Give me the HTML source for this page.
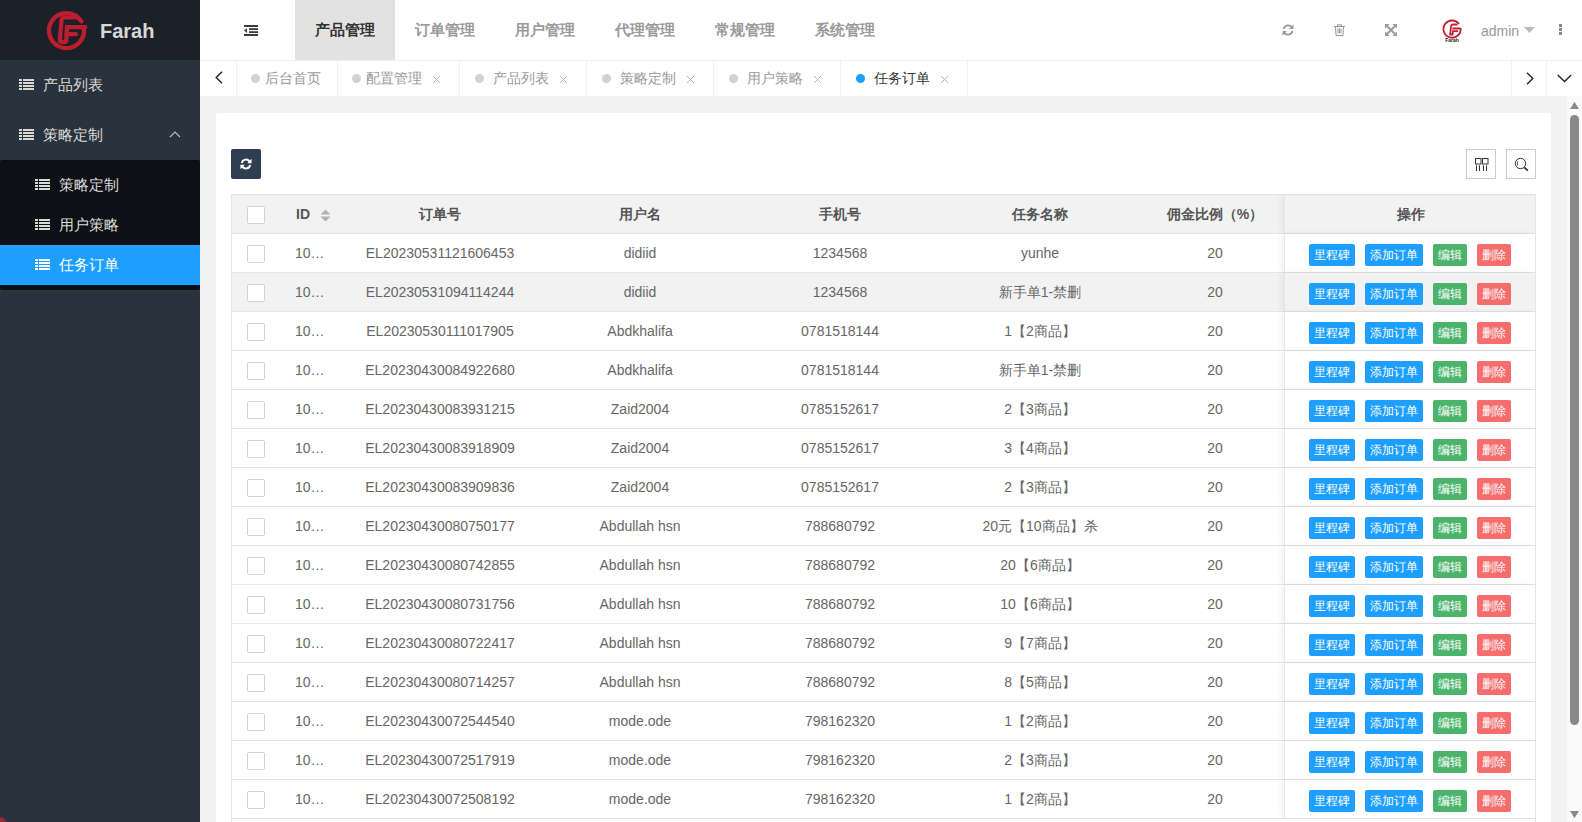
<!DOCTYPE html>
<html><head><meta charset="utf-8">
<style>
*{box-sizing:border-box;margin:0;padding:0}
html,body{width:1582px;height:822px;overflow:hidden;background:#f2f2f2;font-family:"Liberation Sans",sans-serif;font-size:14px;color:#666;position:relative}
svg{position:absolute;overflow:visible}
#side{position:absolute;left:0;top:0;width:200px;height:822px;background:#28333e}
#logo{position:absolute;left:0;top:0;width:200px;height:60px;background:#1c2129}
#logo .t{position:absolute;left:100px;top:18px;font-size:20px;font-weight:bold;color:#d8d8d8;line-height:26px}
.mi{position:absolute;left:0;width:200px;height:50px;line-height:50px;color:#dedad6;font-size:15px}
.mi .tx{position:absolute;left:43px;top:0}
.ico{position:absolute;width:15px;height:11px}
.ico i{position:absolute;left:0;width:3px;height:2px;background:#dcd8d4}
.ico b{position:absolute;left:4px;width:11px;height:2px;background:#dcd8d4}
#sub{position:absolute;left:0;top:160px;width:200px;height:130px;background:#0d1116;border-radius:2px}
.si{position:absolute;left:0;width:200px;height:40px;line-height:40px;color:#dedad6;font-size:15px}
.si .tx{position:absolute;left:59px;top:0}
#hdr{position:absolute;left:200px;top:0;width:1382px;height:60px;background:#fff}
.nav{position:absolute;top:0;height:60px;width:100px;line-height:60px;text-align:center;font-size:15px;color:#999;font-weight:bold}
#tabs{position:absolute;left:200px;top:60px;width:1382px;height:36px;background:#fff;border-top:1px solid #f0f0f0}
.tab{position:absolute;top:0;height:35px;border-left:1px solid #f0f0f0;line-height:35px;color:#999}
.tab .tx{position:absolute;top:0}
.tab .x{position:absolute;top:13px;width:9px;height:9px}
.dot{position:absolute;width:9px;height:9px;border-radius:50%;background:#d2d2d2;top:13px}
#card{position:absolute;left:216px;top:113px;width:1335px;height:720px;background:#fff;border-radius:2px}
.row{position:absolute;left:231px;width:1305px;height:39px;border-bottom:1px solid #e6e6e6;border-left:1px solid #e6e6e6;border-right:1px solid #e6e6e6;background:#fff}
.row span{position:absolute;top:0;line-height:38px;white-space:nowrap;text-align:center}
.row .id{left:63px;text-align:left}
.row span.c{margin-left:-233px}
.cb{position:absolute;left:15px;top:11px;width:18px;height:18px;border:1px solid #d2d2d2;background:#fff;border-radius:2px}
.fx{position:absolute;left:1052px;top:0;width:251px;height:38px;border-left:1px solid #e6e6e6;box-shadow:-3px 0 6px rgba(0,0,0,.06)}
.fx .btn{margin-left:-1285px}
.btn{position:absolute;top:10px;height:22px;line-height:22px;font-size:12px;color:#fff;border-radius:2px;text-align:center}
.b1{background:#1e9fff}.b2{background:#4cb36b}.b3{background:#f56d6c}
.hrow span{font-weight:bold;color:#555}
#sb{position:absolute;left:1567px;top:96px;width:15px;height:726px;background:#fafafa}

</style></head><body>
<div id="side">
  <div id="logo"><svg style="left:40px;top:5px;width:60px;height:50px" viewBox="0 0 60 50">
<g fill="none" stroke="#bb1e2e" stroke-width="4.3" stroke-linecap="round" stroke-linejoin="round">
<path d="M43.67 22.2 A17.5 17.5 0 1 1 41.42 16.46"/>
<path d="M35.5 12.4 L24.3 12.4 Q21.8 12.5 21.5 15.2 L19.8 35 Q19.6 37 21.8 37 L24 37 Q26.1 37 26.3 35 L27 22.2"/>
<path d="M26.6 29.2 L36 29.2"/>
<path d="M27 22.2 L45.2 22.2"/>
</g>
</svg><div class="t">Farah</div></div>
  <div class="mi" style="top:60px"><div class="ico" style="left:19px;top:19px"><i style="top:0px;background:#dcd8d4"></i><b style="top:0px;background:#dcd8d4"></b><i style="top:3px;background:#dcd8d4"></i><b style="top:3px;background:#dcd8d4"></b><i style="top:6px;background:#dcd8d4"></i><b style="top:6px;background:#dcd8d4"></b><i style="top:9px;background:#dcd8d4"></i><b style="top:9px;background:#dcd8d4"></b></div><span class="tx">产品列表</span></div>
  <div class="mi" style="top:110px"><div class="ico" style="left:19px;top:19px"><i style="top:0px;background:#dcd8d4"></i><b style="top:0px;background:#dcd8d4"></b><i style="top:3px;background:#dcd8d4"></i><b style="top:3px;background:#dcd8d4"></b><i style="top:6px;background:#dcd8d4"></i><b style="top:6px;background:#dcd8d4"></b><i style="top:9px;background:#dcd8d4"></i><b style="top:9px;background:#dcd8d4"></b></div><span class="tx">策略定制</span>
  <svg style="left:169px;top:19.5px;width:12px;height:8px" viewBox="0 0 12 8"><path d="M1 7L6 2L11 7" fill="none" stroke="#bbb" stroke-width="1.2"/></svg></div>
  <div id="sub"></div>
  <div style="position:absolute;left:-6px;top:817px;width:12px;height:12px;border-radius:50%;background:#a02533"></div>
  <div class="si" style="top:165px"><div class="ico" style="left:35px;top:14px"><i style="top:0px;background:#dcd8d4"></i><b style="top:0px;background:#dcd8d4"></b><i style="top:3px;background:#dcd8d4"></i><b style="top:3px;background:#dcd8d4"></b><i style="top:6px;background:#dcd8d4"></i><b style="top:6px;background:#dcd8d4"></b><i style="top:9px;background:#dcd8d4"></i><b style="top:9px;background:#dcd8d4"></b></div><span class="tx">策略定制</span></div>
  <div class="si" style="top:205px"><div class="ico" style="left:35px;top:14px"><i style="top:0px;background:#dcd8d4"></i><b style="top:0px;background:#dcd8d4"></b><i style="top:3px;background:#dcd8d4"></i><b style="top:3px;background:#dcd8d4"></b><i style="top:6px;background:#dcd8d4"></i><b style="top:6px;background:#dcd8d4"></b><i style="top:9px;background:#dcd8d4"></i><b style="top:9px;background:#dcd8d4"></b></div><span class="tx">用户策略</span></div>
  <div class="si" style="top:245px;background:#1e9fff;color:#fff"><div class="ico" style="left:35px;top:14px"><i style="top:0px;background:#fff"></i><b style="top:0px;background:#fff"></b><i style="top:3px;background:#fff"></i><b style="top:3px;background:#fff"></b><i style="top:6px;background:#fff"></i><b style="top:6px;background:#fff"></b><i style="top:9px;background:#fff"></i><b style="top:9px;background:#fff"></b></div><span class="tx">任务订单</span></div>
</div>
<div id="hdr">
  <svg style="left:43px;top:24px;width:15px;height:13px" viewBox="0 0 15 13"><g fill="#3a3a3a"><rect x="1" y="1" width="14" height="2"/><rect x="6" y="4.2" width="9" height="1.8"/><rect x="6" y="7.2" width="9" height="1.8"/><rect x="1" y="10" width="14" height="2"/><path d="M4 4.2L1 6.6L4 9z"/></g></svg>
  <div class="nav" style="left:95px;background:#e2e2e2;color:#333">产品管理</div>
  <div class="nav" style="left:195px">订单管理</div>
  <div class="nav" style="left:295px">用户管理</div>
  <div class="nav" style="left:395px">代理管理</div>
  <div class="nav" style="left:495px">常规管理</div>
  <div class="nav" style="left:595px">系统管理</div>
  <svg style="left:1082px;top:24px;width:12px;height:12px" viewBox="0 0 12 12"><g fill="none" stroke="#999" stroke-width="1.8"><path d="M1.6 5 A4.6 4.6 0 0 1 10 3.5"/><path d="M10.4 7 A4.6 4.6 0 0 1 2 8.5"/></g><path d="M11.5 0.5 L11.5 5 L7 5z M0.5 11.5 L0.5 7 L5 7z" fill="#999"/></svg>
  <svg style="left:1134px;top:24px;width:11px;height:12px" viewBox="0 0 11 12"><g fill="none" stroke="#999" stroke-width="1"><path d="M0 2.5H11M3.5 2.5V0.8H7.5V2.5M1.5 2.5L2 11.5H9L9.5 2.5M4 4.5V9.5M5.5 4.5V9.5M7 4.5V9.5"/></g></svg>
  <svg style="left:1185px;top:24px;width:12px;height:12px" viewBox="0 0 12 12"><g fill="#999"><path d="M0 0H4.5L0 4.5z M12 0V4.5L7.5 0z M0 12V7.5L4.5 12z M12 12H7.5L12 7.5z"/></g><path d="M1.5 1.5L10.5 10.5M10.5 1.5L1.5 10.5" stroke="#999" stroke-width="2"/></svg>
  <svg style="left:1242px;top:19px;width:20px;height:24px" viewBox="0 0 20 24"><g fill="none" stroke="#c0212f" stroke-width="1.8"><path d="M18.6 9 A8.6 8.6 0 1 1 17 5"/><path d="M15.5 5.5H11Q9.2 5.6 9 7.5L8.2 15.5H10.6L11 12.2H16M10.4 9.5H18.6"/></g><text x="10" y="23" font-size="5" font-weight="bold" text-anchor="middle" fill="#222" font-family="Liberation Sans">Farah</text></svg>
  <div style="position:absolute;left:1281px;top:23px;font-size:14px;color:#999;line-height:16px">admin</div>
  <svg style="left:1324px;top:27px;width:11px;height:6px" viewBox="0 0 11 6"><path d="M0 0H11L5.5 6z" fill="#bbb"/></svg>
  <svg style="left:1359px;top:24px;width:3px;height:11px" viewBox="0 0 3 11"><g fill="#888"><rect x="0" y="0" width="3" height="3"/><rect x="0" y="4" width="3" height="3"/><rect x="0" y="8" width="3" height="3"/></g></svg>
</div>
<div id="tabs">
  <svg style="left:15px;top:10px;width:8px;height:13px" viewBox="0 0 8 13"><path d="M7 0.8L1.2 6.5L7 12.2" fill="none" stroke="#222" stroke-width="1.4"/></svg>
  <div class="tab" style="left:36px;width:101px"><div class="dot" style="left:14px"></div><span class="tx" style="left:28px">后台首页</span></div>
  <div class="tab" style="left:137px;width:122px"><div class="dot" style="left:14px"></div><span class="tx" style="left:28px">配置管理</span><svg class="x" viewBox="0 0 9 9" style="left:94px;top:14px;width:9px;height:9px"><path d="M1 1L8 8M8 1L1 8" stroke="#b4b4b4" stroke-width="1"/></svg></div>
  <div class="tab" style="left:259px;width:127px"><div class="dot" style="left:15px"></div><span class="tx" style="left:33px">产品列表</span><svg class="x" viewBox="0 0 9 9" style="left:99px;top:14px;width:9px;height:9px"><path d="M1 1L8 8M8 1L1 8" stroke="#b4b4b4" stroke-width="1"/></svg></div>
  <div class="tab" style="left:386px;width:127px"><div class="dot" style="left:15px"></div><span class="tx" style="left:33px">策略定制</span><svg class="x" viewBox="0 0 9 9" style="left:99px;top:14px;width:9px;height:9px"><path d="M1 1L8 8M8 1L1 8" stroke="#b4b4b4" stroke-width="1"/></svg></div>
  <div class="tab" style="left:513px;width:127px"><div class="dot" style="left:15px"></div><span class="tx" style="left:33px">用户策略</span><svg class="x" viewBox="0 0 9 9" style="left:99px;top:14px;width:9px;height:9px"><path d="M1 1L8 8M8 1L1 8" stroke="#b4b4b4" stroke-width="1"/></svg></div>
  <div class="tab" style="left:640px;width:127px;color:#333"><div class="dot" style="left:15px;background:#1e9fff"></div><span class="tx" style="left:33px">任务订单</span><svg class="x" viewBox="0 0 9 9" style="left:99px;top:14px;width:9px;height:9px"><path d="M1 1L8 8M8 1L1 8" stroke="#b4b4b4" stroke-width="1"/></svg></div>
  <div class="tab" style="left:767px;width:1px"></div>
  <div class="tab" style="left:1311px;width:35px"><svg style="left:14px;top:11px;width:8px;height:13px" viewBox="0 0 8 13"><path d="M1 0.8L6.8 6.5L1 12.2" fill="none" stroke="#222" stroke-width="1.4"/></svg></div>
  <div class="tab" style="left:1346px;width:36px"><svg style="left:10px;top:13px;width:15px;height:9px" viewBox="0 0 15 9"><path d="M0.8 1L7.5 7.6L14.2 1" fill="none" stroke="#222" stroke-width="1.4"/></svg></div>
</div>
<div id="card"></div>
<div style="position:absolute;left:231px;top:149px;width:30px;height:30px;background:#2f3e50;border-radius:2px">
<svg style="left:8px;top:9px;width:14px;height:12px" viewBox="0 0 12 12"><g fill="none" stroke="#fff" stroke-width="2"><path d="M1.8 5 A4.4 4.4 0 0 1 9.8 3.6"/><path d="M10.2 7 A4.4 4.4 0 0 1 2.2 8.4"/></g><path d="M11.6 0.8 L11.6 5.2 L7.2 5.2z M0.4 11.2 L0.4 6.8 L4.8 6.8z" fill="#fff"/></svg></div>
<div style="position:absolute;left:1466px;top:149px;width:30px;height:30px;border:1px solid #ccc;background:#fff">
<svg style="left:8px;top:8px;width:14px;height:14px" viewBox="0 0 14 14"><g fill="none" stroke="#333" stroke-width="1"><rect x="0.5" y="0.5" width="5.5" height="5.5"/><rect x="7.5" y="0.5" width="5.5" height="5.5"/><path d="M1.5 7.3V13M4.5 7.3V13M8.5 7.3V13M11.5 7.3V13"/></g></svg></div>
<div style="position:absolute;left:1506px;top:149px;width:30px;height:30px;border:1px solid #ccc;background:#fff">
<svg style="left:7px;top:7px;width:16px;height:16px" viewBox="0 0 16 16"><circle cx="6.5" cy="6.5" r="5.2" fill="none" stroke="#333" stroke-width="1"/><path d="M3.6 4.5Q3 6.5 3.6 8.5" fill="none" stroke="#333" stroke-width="0.8"/><path d="M10.3 10.3L13.8 13.6" stroke="#333" stroke-width="1.8"/></svg></div>
<div class="row hrow" style="top:194px;background:#f2f2f2;border-top:1px solid #e6e6e6;height:40px"><div class="cb" style="top:11px"></div>
<span style="left:64px;top:0">ID</span>
<svg style="left:88px;top:14px;width:11px;height:13px" viewBox="0 0 11 13"><path d="M0.5 5.5L5.5 0.5L10.5 5.5z M0.5 7.5L5.5 12.5L10.5 7.5z" fill="#b2b2b2"/></svg>
<span class="c" style="left:341px;width:200px;top:0">订单号</span>
<span class="c" style="left:541px;width:200px;top:0">用户名</span>
<span class="c" style="left:741px;width:200px;top:0">手机号</span>
<span class="c" style="left:941px;width:200px;top:0">任务名称</span>
<span class="c" style="left:1141px;width:150px;top:0">佣金比例（%）</span>
<div class="fx" style="background:#f2f2f2;height:38px"><span style="left:0;width:251px;top:0">操作</span></div>
</div>
<div id="sb">
<svg style="left:3px;top:5.5px;width:9px;height:7px" viewBox="0 0 9 7"><path d="M0 7L4.5 0L9 7z" fill="#888"/></svg>
<div style="position:absolute;left:3px;top:19px;width:9px;height:610px;background:#898989;border-radius:5px"></div>
<svg style="left:3px;top:715px;width:9px;height:7px" viewBox="0 0 9 7"><path d="M0 0L4.5 7L9 0z" fill="#888"/></svg>
</div>

<div id="rows">
<div class="row" style="top:234px;background:#fff"><div class="cb"></div><span class="id">10…</span><span class="c" style="left:341px;width:200px">EL20230531121606453</span><span class="c" style="left:541px;width:200px">didiid</span><span class="c" style="left:741px;width:200px">1234568</span><span class="c" style="left:941px;width:200px">yunhe</span><span class="c" style="left:1141px;width:150px">20</span>
<div class="fx" style="background:#fff"><div class="btn b1" style="left:1309px;width:46px">里程碑</div><div class="btn b1" style="left:1365px;width:58px">添加订单</div><div class="btn b2" style="left:1433px;width:34px">编辑</div><div class="btn b3" style="left:1477px;width:34px">删除</div></div></div><div class="row" style="top:273px;background:#f2f2f2"><div class="cb"></div><span class="id">10…</span><span class="c" style="left:341px;width:200px">EL20230531094114244</span><span class="c" style="left:541px;width:200px">didiid</span><span class="c" style="left:741px;width:200px">1234568</span><span class="c" style="left:941px;width:200px">新手单1-禁删</span><span class="c" style="left:1141px;width:150px">20</span>
<div class="fx" style="background:#f2f2f2"><div class="btn b1" style="left:1309px;width:46px">里程碑</div><div class="btn b1" style="left:1365px;width:58px">添加订单</div><div class="btn b2" style="left:1433px;width:34px">编辑</div><div class="btn b3" style="left:1477px;width:34px">删除</div></div></div><div class="row" style="top:312px;background:#fff"><div class="cb"></div><span class="id">10…</span><span class="c" style="left:341px;width:200px">EL20230530111017905</span><span class="c" style="left:541px;width:200px">Abdkhalifa</span><span class="c" style="left:741px;width:200px">0781518144</span><span class="c" style="left:941px;width:200px">1【2商品】</span><span class="c" style="left:1141px;width:150px">20</span>
<div class="fx" style="background:#fff"><div class="btn b1" style="left:1309px;width:46px">里程碑</div><div class="btn b1" style="left:1365px;width:58px">添加订单</div><div class="btn b2" style="left:1433px;width:34px">编辑</div><div class="btn b3" style="left:1477px;width:34px">删除</div></div></div><div class="row" style="top:351px;background:#fff"><div class="cb"></div><span class="id">10…</span><span class="c" style="left:341px;width:200px">EL20230430084922680</span><span class="c" style="left:541px;width:200px">Abdkhalifa</span><span class="c" style="left:741px;width:200px">0781518144</span><span class="c" style="left:941px;width:200px">新手单1-禁删</span><span class="c" style="left:1141px;width:150px">20</span>
<div class="fx" style="background:#fff"><div class="btn b1" style="left:1309px;width:46px">里程碑</div><div class="btn b1" style="left:1365px;width:58px">添加订单</div><div class="btn b2" style="left:1433px;width:34px">编辑</div><div class="btn b3" style="left:1477px;width:34px">删除</div></div></div><div class="row" style="top:390px;background:#fff"><div class="cb"></div><span class="id">10…</span><span class="c" style="left:341px;width:200px">EL20230430083931215</span><span class="c" style="left:541px;width:200px">Zaid2004</span><span class="c" style="left:741px;width:200px">0785152617</span><span class="c" style="left:941px;width:200px">2【3商品】</span><span class="c" style="left:1141px;width:150px">20</span>
<div class="fx" style="background:#fff"><div class="btn b1" style="left:1309px;width:46px">里程碑</div><div class="btn b1" style="left:1365px;width:58px">添加订单</div><div class="btn b2" style="left:1433px;width:34px">编辑</div><div class="btn b3" style="left:1477px;width:34px">删除</div></div></div><div class="row" style="top:429px;background:#fff"><div class="cb"></div><span class="id">10…</span><span class="c" style="left:341px;width:200px">EL20230430083918909</span><span class="c" style="left:541px;width:200px">Zaid2004</span><span class="c" style="left:741px;width:200px">0785152617</span><span class="c" style="left:941px;width:200px">3【4商品】</span><span class="c" style="left:1141px;width:150px">20</span>
<div class="fx" style="background:#fff"><div class="btn b1" style="left:1309px;width:46px">里程碑</div><div class="btn b1" style="left:1365px;width:58px">添加订单</div><div class="btn b2" style="left:1433px;width:34px">编辑</div><div class="btn b3" style="left:1477px;width:34px">删除</div></div></div><div class="row" style="top:468px;background:#fff"><div class="cb"></div><span class="id">10…</span><span class="c" style="left:341px;width:200px">EL20230430083909836</span><span class="c" style="left:541px;width:200px">Zaid2004</span><span class="c" style="left:741px;width:200px">0785152617</span><span class="c" style="left:941px;width:200px">2【3商品】</span><span class="c" style="left:1141px;width:150px">20</span>
<div class="fx" style="background:#fff"><div class="btn b1" style="left:1309px;width:46px">里程碑</div><div class="btn b1" style="left:1365px;width:58px">添加订单</div><div class="btn b2" style="left:1433px;width:34px">编辑</div><div class="btn b3" style="left:1477px;width:34px">删除</div></div></div><div class="row" style="top:507px;background:#fff"><div class="cb"></div><span class="id">10…</span><span class="c" style="left:341px;width:200px">EL20230430080750177</span><span class="c" style="left:541px;width:200px">Abdullah hsn</span><span class="c" style="left:741px;width:200px">788680792</span><span class="c" style="left:941px;width:200px">20元【10商品】杀</span><span class="c" style="left:1141px;width:150px">20</span>
<div class="fx" style="background:#fff"><div class="btn b1" style="left:1309px;width:46px">里程碑</div><div class="btn b1" style="left:1365px;width:58px">添加订单</div><div class="btn b2" style="left:1433px;width:34px">编辑</div><div class="btn b3" style="left:1477px;width:34px">删除</div></div></div><div class="row" style="top:546px;background:#fff"><div class="cb"></div><span class="id">10…</span><span class="c" style="left:341px;width:200px">EL20230430080742855</span><span class="c" style="left:541px;width:200px">Abdullah hsn</span><span class="c" style="left:741px;width:200px">788680792</span><span class="c" style="left:941px;width:200px">20【6商品】</span><span class="c" style="left:1141px;width:150px">20</span>
<div class="fx" style="background:#fff"><div class="btn b1" style="left:1309px;width:46px">里程碑</div><div class="btn b1" style="left:1365px;width:58px">添加订单</div><div class="btn b2" style="left:1433px;width:34px">编辑</div><div class="btn b3" style="left:1477px;width:34px">删除</div></div></div><div class="row" style="top:585px;background:#fff"><div class="cb"></div><span class="id">10…</span><span class="c" style="left:341px;width:200px">EL20230430080731756</span><span class="c" style="left:541px;width:200px">Abdullah hsn</span><span class="c" style="left:741px;width:200px">788680792</span><span class="c" style="left:941px;width:200px">10【6商品】</span><span class="c" style="left:1141px;width:150px">20</span>
<div class="fx" style="background:#fff"><div class="btn b1" style="left:1309px;width:46px">里程碑</div><div class="btn b1" style="left:1365px;width:58px">添加订单</div><div class="btn b2" style="left:1433px;width:34px">编辑</div><div class="btn b3" style="left:1477px;width:34px">删除</div></div></div><div class="row" style="top:624px;background:#fff"><div class="cb"></div><span class="id">10…</span><span class="c" style="left:341px;width:200px">EL20230430080722417</span><span class="c" style="left:541px;width:200px">Abdullah hsn</span><span class="c" style="left:741px;width:200px">788680792</span><span class="c" style="left:941px;width:200px">9【7商品】</span><span class="c" style="left:1141px;width:150px">20</span>
<div class="fx" style="background:#fff"><div class="btn b1" style="left:1309px;width:46px">里程碑</div><div class="btn b1" style="left:1365px;width:58px">添加订单</div><div class="btn b2" style="left:1433px;width:34px">编辑</div><div class="btn b3" style="left:1477px;width:34px">删除</div></div></div><div class="row" style="top:663px;background:#fff"><div class="cb"></div><span class="id">10…</span><span class="c" style="left:341px;width:200px">EL20230430080714257</span><span class="c" style="left:541px;width:200px">Abdullah hsn</span><span class="c" style="left:741px;width:200px">788680792</span><span class="c" style="left:941px;width:200px">8【5商品】</span><span class="c" style="left:1141px;width:150px">20</span>
<div class="fx" style="background:#fff"><div class="btn b1" style="left:1309px;width:46px">里程碑</div><div class="btn b1" style="left:1365px;width:58px">添加订单</div><div class="btn b2" style="left:1433px;width:34px">编辑</div><div class="btn b3" style="left:1477px;width:34px">删除</div></div></div><div class="row" style="top:702px;background:#fff"><div class="cb"></div><span class="id">10…</span><span class="c" style="left:341px;width:200px">EL20230430072544540</span><span class="c" style="left:541px;width:200px">mode.ode</span><span class="c" style="left:741px;width:200px">798162320</span><span class="c" style="left:941px;width:200px">1【2商品】</span><span class="c" style="left:1141px;width:150px">20</span>
<div class="fx" style="background:#fff"><div class="btn b1" style="left:1309px;width:46px">里程碑</div><div class="btn b1" style="left:1365px;width:58px">添加订单</div><div class="btn b2" style="left:1433px;width:34px">编辑</div><div class="btn b3" style="left:1477px;width:34px">删除</div></div></div><div class="row" style="top:741px;background:#fff"><div class="cb"></div><span class="id">10…</span><span class="c" style="left:341px;width:200px">EL20230430072517919</span><span class="c" style="left:541px;width:200px">mode.ode</span><span class="c" style="left:741px;width:200px">798162320</span><span class="c" style="left:941px;width:200px">2【3商品】</span><span class="c" style="left:1141px;width:150px">20</span>
<div class="fx" style="background:#fff"><div class="btn b1" style="left:1309px;width:46px">里程碑</div><div class="btn b1" style="left:1365px;width:58px">添加订单</div><div class="btn b2" style="left:1433px;width:34px">编辑</div><div class="btn b3" style="left:1477px;width:34px">删除</div></div></div><div class="row" style="top:780px;background:#fff"><div class="cb"></div><span class="id">10…</span><span class="c" style="left:341px;width:200px">EL20230430072508192</span><span class="c" style="left:541px;width:200px">mode.ode</span><span class="c" style="left:741px;width:200px">798162320</span><span class="c" style="left:941px;width:200px">1【2商品】</span><span class="c" style="left:1141px;width:150px">20</span>
<div class="fx" style="background:#fff"><div class="btn b1" style="left:1309px;width:46px">里程碑</div><div class="btn b1" style="left:1365px;width:58px">添加订单</div><div class="btn b2" style="left:1433px;width:34px">编辑</div><div class="btn b3" style="left:1477px;width:34px">删除</div></div></div><div class="row" style="top:819px"><div class="cb"></div></div>
</div>
</body></html>
